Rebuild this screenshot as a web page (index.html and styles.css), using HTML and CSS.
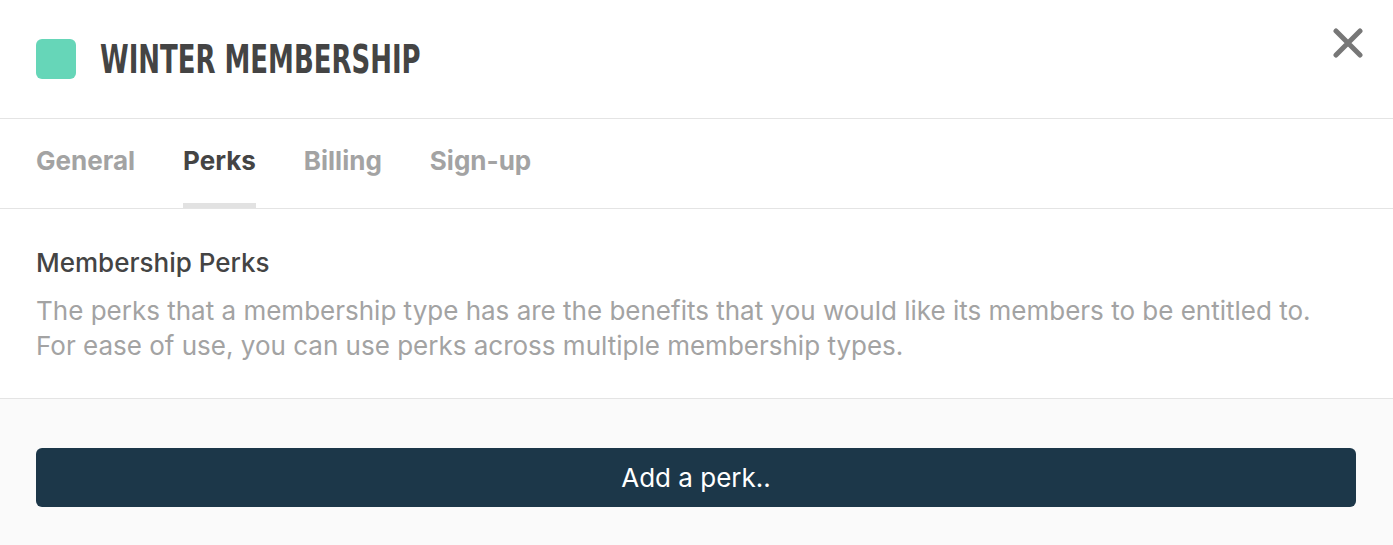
FILE: index.html
```html
<!DOCTYPE html>
<html lang="en">
<head>
    <meta charset="UTF-8">
    <meta name="viewport" content="width=device-width, initial-scale=1.0">
    <title>Winter Membership</title>
    <link rel="stylesheet" href="styles.css">
</head>
<body>
    <div class="modal">
        <header class="modal-header">
            <span class="swatch"></span>
            <h1>WINTER MEMBERSHIP</h1>
            <button class="close" type="button" aria-label="Close">
                <svg width="30" height="30" viewBox="0 0 30 30">
                    <path d="M3 3 L27 27 M27 3 L3 27" stroke="#777" stroke-width="5" stroke-linecap="round" fill="none"/>
                </svg>
            </button>
        </header>

        <nav class="tabs">
            <a class="tab">General</a>
            <a class="tab active">Perks</a>
            <a class="tab">Billing</a>
            <a class="tab">Sign-up</a>
        </nav>

        <section class="perks-info">
            <h2>Membership Perks</h2>
            <p>The perks that a membership type has are the benefits that you would like its members to be entitled to.<br>
            For ease of use, you can use perks across multiple membership types.</p>
        </section>

        <div class="perks-actions">
            <button class="add-perk" type="button">Add a perk..</button>
        </div>
    </div>
</body>
</html>
```

FILE: styles.css
```css
body {
    margin: 0;
    font-family: 'Inter', 'Noto Sans', sans-serif;
    background-color: #fff;
    color: #444;
}
.modal {
    display: flex;
    flex-direction: column;
    min-height: 100vh;
}
.modal-header {
    display: flex;
    align-items: center;
    height: 118px;
    padding: 0 30px 0 36px;
    border-bottom: 1px solid #e4e4e4;
}
.swatch {
    width: 40px;
    height: 40px;
    border-radius: 6px;
    background-color: #66d6b8;
    margin-right: 24px;
}
/* condensed display title */
h1 {
    margin: 0;
    font-family: 'DejaVu Sans', sans-serif;
    font-stretch: condensed;
    font-weight: bold;
    font-size: 39px;
    color: #444;
    transform: scaleX(0.74);
    transform-origin: left center;
}
.close {
    margin-left: auto;
    align-self: flex-start;
    margin-top: 28px;
    padding: 0;
    border: none;
    background: none;
    cursor: pointer;
    line-height: 0;
}
.tabs {
    display: flex;
    gap: 48px;
    height: 89px;
    padding: 0 36px;
    border-bottom: 1px solid #e4e4e4;
}
.tab {
    display: flex;
    align-items: center;
    padding-bottom: 1px;
    border-bottom: 5px solid transparent;
    font-size: 26px;
    font-weight: 700;
    color: #a3a3a3;
    cursor: pointer;
}
.tab.active {
    color: #444;
    border-bottom-color: #e2e2e2;
}
.perks-info {
    padding: 39px 36px 0;
    height: 150px;
    border-bottom: 1px solid #e4e4e4;
}
h2 {
    margin: 0 0 15px;
    font-size: 26px;
    line-height: 30px;
    font-weight: 500;
    color: #444;
}
.perks-info p {
    margin: 0;
    font-size: 26px;
    line-height: 35px;
    color: #a3a3a3;
}
.perks-actions {
    flex: 1;
    background-color: #fafafa;
    padding: 49px 37px 0 36px;
}
.add-perk {
    width: 100%;
    height: 59px;
    border: none;
    border-radius: 6px;
    background-color: #1c3749;
    color: #fff;
    font-family: 'Inter', 'Noto Sans', sans-serif;
    font-size: 26px;
    cursor: pointer;
}
```
